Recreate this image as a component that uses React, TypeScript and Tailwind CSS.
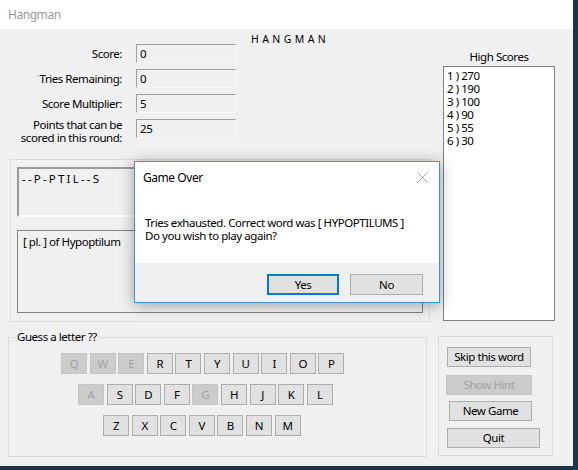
import React from "react";

const stats = [
  { label: "Score:", value: "0" },
  { label: "Tries Remaining:", value: "0" },
  { label: "Score Multiplier:", value: "5" },
];

const keyRows = [
  { offset: "ml-[52px]", keys: ["Q", "W", "E", "R", "T", "Y", "U", "I", "O", "P"] },
  { offset: "ml-[69px]", keys: ["A", "S", "D", "F", "G", "H", "J", "K", "L"] },
  { offset: "ml-[94px]", keys: ["Z", "X", "C", "V", "B", "N", "M"] },
];

const usedLetters = ["Q", "W", "E", "A", "G"];

const highScores = ["1 ) 270", "2 ) 190", "3 ) 100", "4 ) 90", "5 ) 55", "6 ) 30"];

function StatBox({ value }: { value: string }) {
  return (
    <div className="w-[100px] h-[19px] bg-[#f0f0f0] border border-t-[#a0a0a0] border-l-[#a0a0a0] border-r-[#f8f8f8] border-b-[#f8f8f8] pl-[3px] leading-[17px]">
      {value}
    </div>
  );
}

function LetterKey({ letter }: { letter: string }) {
  const used = usedLetters.includes(letter);
  return (
    <div
      className={`w-[26px] h-[21px] flex items-center justify-center border ${
        used
          ? "bg-[#cccccc] border-[#c4c4c4] text-[#a3a3a3]"
          : "bg-[#e1e1e1] border-[#adadad] text-black"
      }`}
    >
      {letter}
    </div>
  );
}

export default function App() {
  return (
    <div className="w-[578px] h-[470px] bg-[#1e3349] overflow-hidden font-['Noto_Sans',sans-serif] text-[11.5px] tracking-[-0.45px] text-black">
      <div className="relative w-[573px] h-[466px] bg-[#f0f0f0] flex flex-col">
        {/* Title bar */}
        <div className="h-[29px] bg-white flex items-center pl-[8px] text-[12px] text-[#9a9a9a]">Hangman</div>

        <div className="flex">
          {/* Left column */}
          <div className="w-[430px] flex flex-col">
            <div className="h-[130px] flex items-start">
              <div className="mt-[15px] flex flex-col gap-[6px]">
                {stats.map((s) => (
                  <div key={s.label} className="flex items-center gap-[14px] h-[19px]">
                    <div className="w-[122px] text-right">{s.label}</div>
                    <StatBox value={s.value} />
                  </div>
                ))}
                <div className="flex items-start gap-[14px]">
                  <div className="w-[122px] text-right leading-[13px] -mt-[1px]">
                    Points that can be
                    <br />
                    scored in this round:
                  </div>
                  <StatBox value="25" />
                </div>
              </div>
              <div className="ml-[15px] mt-[3px] text-[10.5px] tracking-[3.4px]">HANGMAN</div>
            </div>

            {/* Word group */}
            <div className="ml-[10px] w-[420px] h-[163px] border border-[#dcdcdc] pt-[7px] pl-[6px]">
              <div className="w-[406px] h-[50px] border-2 border-t-[#9a9a9a] border-l-[#9a9a9a] border-r-white border-b-white pl-[3px] pt-[1px] tracking-[2.2px]">
                --P-PTIL--S
              </div>
              <div className="mt-[13px] w-[406px] h-[83px] border border-[#828282] pl-[5px] pt-[2px]">
                [ pl. ] of Hypoptilum
              </div>
            </div>

            {/* Keyboard */}
            <fieldset className="ml-[8px] mt-[8px] w-[419px] h-[127px] border border-[#dcdcdc]">
              <legend className="ml-[7px] px-[1px] leading-[14px]">Guess a letter ??</legend>
              <div className="mt-[9px] flex flex-col gap-[10px]">
                {keyRows.map((row, i) => (
                  <div key={i} className={`flex gap-[2.6px] ${row.offset}`}>
                    {row.keys.map((k) => (
                      <LetterKey key={k} letter={k} />
                    ))}
                  </div>
                ))}
              </div>
            </fieldset>
          </div>

          {/* Right column */}
          <div className="ml-[8px] w-[135px] flex flex-col">
            <div className="mt-[21px] w-[122px] text-center leading-[14px]">High Scores</div>
            <div className="ml-[5px] mt-[2px] w-[112px] h-[255px] bg-white border border-[#828282] pl-[3px] pt-[2px] leading-[13px]">
              {highScores.map((h) => (
                <div key={h}>{h}</div>
              ))}
            </div>
            <div className="mt-[15px] w-[115px] h-[120px] border border-[#dcdcdc] flex flex-col">
              <button className="ml-[8px] mt-[10px] w-[84px] h-[20px] bg-[#e1e1e1] border border-[#adadad]">
                Skip this word
              </button>
              <button className="ml-[7px] mt-[8px] w-[86px] h-[20px] bg-[#cccccc] border border-[#c4c4c4] text-[#a3a3a3]">
                Show Hint
              </button>
              <button className="ml-[10px] mt-[6px] w-[83px] h-[20px] bg-[#e1e1e1] border border-[#adadad]">
                New Game
              </button>
              <button className="ml-[8px] mt-[7px] w-[93px] h-[20px] bg-[#e1e1e1] border border-[#adadad]">
                Quit
              </button>
            </div>
          </div>
        </div>

        {/* Game Over dialog */}
        <div className="absolute left-[134px] top-[161px] w-[306px] h-[142px] border border-[#4a8ccc] bg-[#f0f0f0] shadow-[0_2px_14px_rgba(0,0,0,0.35)] flex flex-col">
          <div className="h-[101px] bg-white flex flex-col">
            <div className="flex items-center justify-between h-[31px] pl-[8px] pr-[11px] text-[12px]">
              <span>Game Over</span>
              <svg width="11" height="11" viewBox="0 0 11 11" className="stroke-[#a8a8a8]">
                <path d="M0.5 0.5 L10.5 10.5 M10.5 0.5 L0.5 10.5" strokeWidth="1" fill="none" />
              </svg>
            </div>
            <div className="mt-[23px] pl-[10px] leading-[13px]">
              Tries exhausted. Correct word was [ HYPOPTILUMS ]
              <br />
              Do you wish to play again?
            </div>
          </div>
          <div className="mt-[11px] flex gap-[11px] ml-[132px]">
            <button className="w-[72px] h-[21px] bg-[#e1e1e1] border-2 border-[#0078d7]">Yes</button>
            <button className="w-[73px] h-[21px] bg-[#e1e1e1] border border-[#adadad]">No</button>
          </div>
        </div>
      </div>
    </div>
  );
}
